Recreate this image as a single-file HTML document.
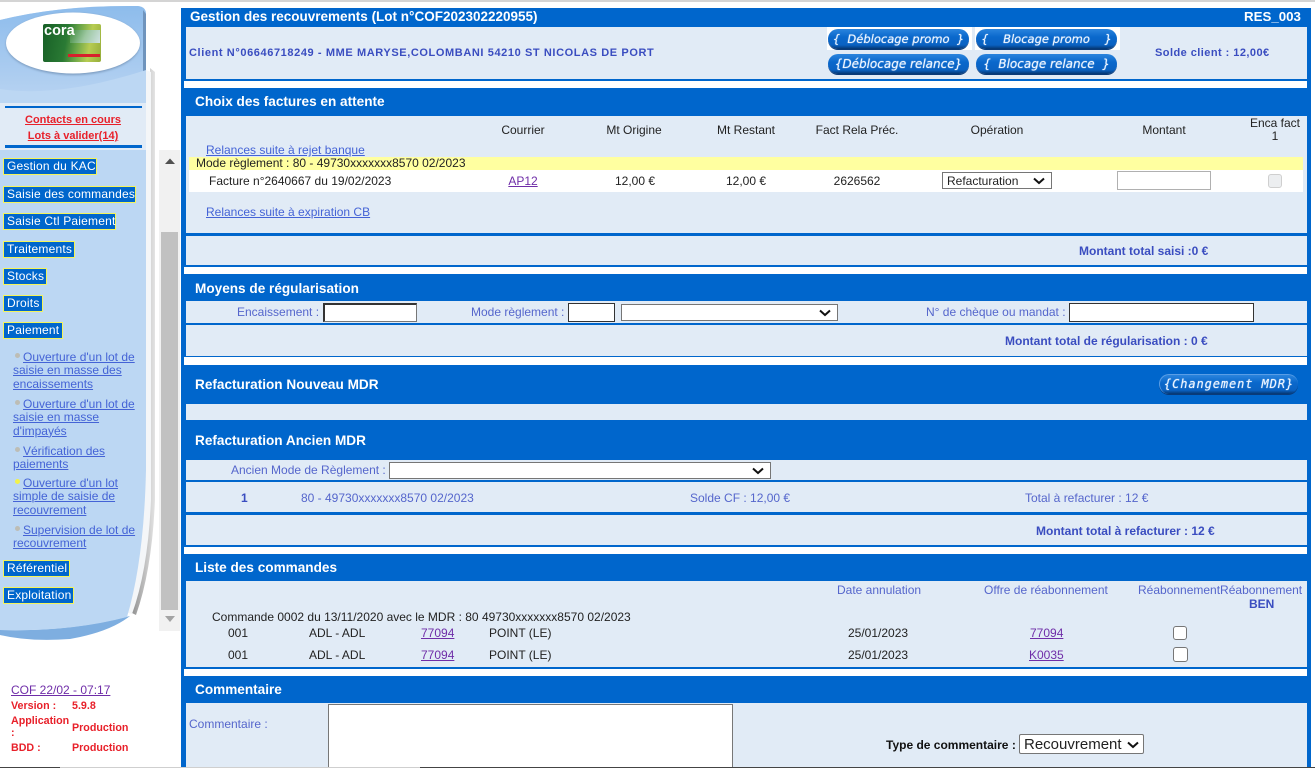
<!DOCTYPE html>
<html lang="fr"><head><meta charset="utf-8"><title>Gestion des recouvrements</title>
<style>
html,body{margin:0;padding:0;background:#fff;width:1315px;height:768px;overflow:hidden}
body{position:relative;font:12px/14px "Liberation Sans",Arial,sans-serif;color:#222}
div,a,span,select,input,textarea{position:absolute;box-sizing:border-box;white-space:nowrap}
a{color:#4463d6;text-decoration:underline}
.v{color:#6f2da8}
.b{background:#0066cc}.l{background:#e1ebf6}.w{background:#fff}
.h{color:#fff;font-weight:bold;font-size:13.6px;line-height:16px}
.lb{color:#5566cc}
.bd{color:#3a4dc0;font-weight:bold}
.c{text-align:center;transform:translateX(-50%)}
.m{background:#0066cc;color:#fff;border:1px solid #f4f45a;height:17px;line-height:15px;padding:0 0 0 3px;font-size:12px;letter-spacing:.2px;left:3px}
.bt{border-radius:10px;background:linear-gradient(#2a84dd 0,#0a68cc 40%,#0a62c2 80%,#06356f 100%);color:#eef6ff;font:italic 11.5px/21px "DejaVu Sans",sans-serif;text-align:center;height:20px;box-shadow:0 1px 0 #0a3a78;text-shadow:0 0 1px #cfe4ff}
.s{left:13px;width:125px;line-height:13.4px;white-space:normal}
.s a{position:static;white-space:normal}
.dot{display:inline-block;position:static;width:5px;height:5px;border-radius:50%;background:#bdbdb5;margin:0 3px 5px 2px;vertical-align:middle}
.r{color:#e8202a;font-weight:bold;font-size:10.7px}
.sel{background:#fff;border:1px solid #767676;height:17px;line-height:16px;padding-left:4px;color:#222}
.sel svg{position:absolute;top:4px;right:6px}
.cb{width:14px;height:14px;border:1px solid #767676;border-radius:3px;background:#fff}
</style></head><body>
<div style="left:0;top:0;width:1315px;height:2px;background:#d4d4d4"></div>

<!-- Sidebar -->
<div style="left:159px;top:150px;width:21px;height:481px;background:#f1f1f1"></div>
<div style="left:161px;top:232px;width:17px;height:378px;background:#c1c1c1"></div>
<svg style="position:absolute;left:163px;top:157px" width="14" height="9"><path d="M2 7L7 1.500L12 7Z" fill="#505050"/></svg>
<svg style="position:absolute;left:163px;top:615px" width="14" height="9"><path d="M2 1L7 7L12 1Z" fill="#a3a3a3"/></svg>
<svg style="position:absolute;left:0;top:0" width="158" height="650">
<defs><linearGradient id="g" x1="0" y1="0" x2="0" y2="1"><stop offset="0" stop-color="#8dbcec"/><stop offset="1" stop-color="#b4d1f1"/></linearGradient>
<linearGradient id="sh" x1="0" x2="1" y1="0" y2="0"><stop offset="0" stop-color="#8a8a8a"/><stop offset="1" stop-color="#e4e4e4"/></linearGradient>
<filter id="bl"><feGaussianBlur stdDeviation="1"/></filter></defs>
<path d="M150 68L155 72L155 500Q152 570 136 615L130 612Q146 570 150 500Z" fill="url(#sh)"/>
<path d="M146 70L151 72L151 500Q148 570 132 614L125 612Q142 560 144 480Z" fill="#f4f6f8"/>
<path d="M0 630Q70 632 130 616Q110 632 70 639Q30 642 0 635Z" fill="#7eaee0"/>
<path d="M0 20Q60 5 138 6Q146 7 146 14L146 470Q144 560 127 617Q70 632 0 630Z" fill="#bcd7f3"/>
<path d="M0 20Q60 5 138 6Q146 7 146 14L146 70Q60 98 0 89Z" fill="url(#g)"/>
<path d="M143 10L146 14L146 70L143 71Z" fill="#6f94bd"/>
<ellipse cx="73" cy="44" rx="67" ry="31" fill="#7d9cc0" filter="url(#bl)"/>
<ellipse cx="73" cy="43" rx="67" ry="30.500" fill="#fff"/>
</svg>
<div style="left:43px;top:24px;width:58px;height:38px;border-radius:2px;background:linear-gradient(100deg,#175f26 0,#2a7a34 40%,#6aa548 58%,#b7cc52 78%,#96ad3a 100%)"></div>
<div style="left:70px;top:30px;width:30px;height:13px;background:linear-gradient(115deg,#3f8a3d,#9cc7a0 50%,#cfe2e2)"></div>
<div style="left:68px;top:54px;width:32px;height:3px;background:#d8202c"></div>
<div style="left:44px;top:23px;color:#fff;font:bold 14.5px/17px 'Liberation Sans',sans-serif">cora</div>

<div class="l" style="left:0;top:103px;width:146px;height:47px"></div>
<div class="b" style="left:5px;top:106px;width:137px;height:2px"></div>
<div class="b" style="left:5px;top:145px;width:137px;height:3px"></div>
<a class="c" style="left:73px;top:113px;color:#e8202a;font-weight:bold;font-size:11px">Contacts en cours</a>
<a class="c" style="left:73px;top:129px;color:#e8202a;font-weight:bold;font-size:11px">Lots à valider(14)</a>

<div class="m" style="top:158px;width:94px">Gestion du KAC</div>
<div class="m" style="top:186px;width:133px">Saisie des commandes</div>
<div class="m" style="top:213px;width:113px">Saisie Ctl Paiement</div>
<div class="m" style="top:241px;width:72px">Traitements</div>
<div class="m" style="top:268px;width:44px">Stocks</div>
<div class="m" style="top:295px;width:40px">Droits</div>
<div class="m" style="top:322px;width:60px">Paiement</div>
<div class="s" style="top:351px"><span class="dot"></span><a>Ouverture d'un lot de saisie en masse des encaissements</a></div>
<div class="s" style="top:398px"><span class="dot"></span><a>Ouverture d'un lot de saisie en masse d'impayés</a></div>
<div class="s" style="top:445px"><span class="dot"></span><a>Vérification des paiements</a></div>
<div class="s" style="top:477px"><span class="dot" style="background:#f2f24a"></span><a>Ouverture d'un lot simple de saisie de recouvrement</a></div>
<div class="s" style="top:524px"><span class="dot"></span><a>Supervision de lot de recouvrement</a></div>
<div class="m" style="top:560px;width:67px">Référentiel</div>
<div class="m" style="top:587px;width:71px">Exploitation</div>

<a class="v" style="left:11px;top:683px">COF 22/02 - 07:17</a>
<div class="r" style="left:11px;top:699px">Version :</div><div class="r" style="left:72px;top:699px">5.9.8</div>
<div class="r" style="left:11px;top:715px;line-height:12px;white-space:normal;width:60px">Application :</div><div class="r" style="left:72px;top:721px">Production</div>
<div class="r" style="left:11px;top:741px">BDD :</div><div class="r" style="left:72px;top:741px">Production</div>

<!-- Main frame -->
<div class="b" style="left:181px;top:8px;width:1130px;height:760px"></div>
<div class="l" style="left:186px;top:27px;width:1121px;height:52px"></div>
<div class="w" style="left:184px;top:81px;width:1123px;height:7px"></div>
<div class="l" style="left:186px;top:116px;width:1121px;height:117px"></div>
<div class="l" style="left:186px;top:236px;width:1121px;height:29px"></div>
<div class="w" style="left:184px;top:267px;width:1123px;height:7px"></div>
<div class="l" style="left:186px;top:301px;width:1121px;height:22px"></div>
<div class="l" style="left:186px;top:325px;width:1121px;height:31px"></div>
<div class="w" style="left:184px;top:357px;width:1123px;height:8px"></div>
<div class="l" style="left:186px;top:404px;width:1121px;height:16px"></div>
<div class="l" style="left:186px;top:460px;width:1121px;height:20px"></div>
<div class="l" style="left:186px;top:482px;width:1121px;height:30px"></div>
<div class="l" style="left:186px;top:515px;width:1121px;height:30px"></div>
<div class="w" style="left:184px;top:547px;width:1123px;height:7px"></div>
<div class="l" style="left:186px;top:581px;width:1121px;height:86px"></div>
<div class="w" style="left:184px;top:669px;width:1123px;height:7px"></div>
<div class="l" style="left:186px;top:703px;width:1121px;height:65px"></div>

<!-- Header -->
<div class="h" style="left:190px;top:9px;font-size:13.5px">Gestion des recouvrements (Lot n°COF202302220955)</div>
<div class="h" style="left:1244px;top:9px;font-size:13.3px">RES_003</div>
<div class="bd" style="left:189px;top:46px;font-size:11px;letter-spacing:.6px">Client N°06646718249 - MME MARYSE,COLOMBANI 54210 ST NICOLAS DE PORT</div>
<div class="w" style="left:827px;top:27px;width:145px;height:23px"></div>
<div class="w" style="left:975px;top:27px;width:145px;height:23px"></div>
<div class="bt" style="left:828px;top:29px;width:141px">{&nbsp; Déblocage promo &nbsp;}</div>
<div class="bt" style="left:976px;top:29px;width:141px">{&nbsp;&nbsp;&nbsp; Blocage promo &nbsp;&nbsp;&nbsp;}</div>
<div class="bt" style="left:828px;top:54px;width:141px;font-size:12px">{Déblocage relance}</div>
<div class="bt" style="left:976px;top:54px;width:141px;font-size:12px">{ &nbsp;Blocage relance &nbsp;}</div>
<div class="bd" style="left:1155px;top:46px;font-size:11px;letter-spacing:.45px">Solde client : 12,00€</div>

<!-- Choix -->
<div class="h" style="left:195px;top:94px">Choix des factures en attente</div>
<div class="c" style="left:523px;top:123px">Courrier</div>
<div class="c" style="left:634px;top:123px">Mt Origine</div>
<div class="c" style="left:746px;top:123px">Mt Restant</div>
<div class="c" style="left:857px;top:123px">Fact Rela Préc.</div>
<div class="c" style="left:997px;top:123px">Opération</div>
<div class="c" style="left:1164px;top:123px">Montant</div>
<div class="c" style="left:1275px;top:117px;text-align:center;line-height:13px">Enca fact<br>1</div>
<a style="left:206px;top:143px">Relances suite à rejet banque</a>
<div style="left:189px;top:157px;width:1114px;height:13px;background:#ffffa0"></div>
<div style="left:196px;top:157px;line-height:13px">Mode règlement : 80 - 49730xxxxxxx8570 02/2023</div>
<div class="w" style="left:189px;top:170px;width:1114px;height:22px"></div>
<div style="left:209px;top:174px">Facture n°2640667 du 19/02/2023</div>
<a class="c v" style="left:523px;top:174px">AP12</a>
<div class="c" style="left:635px;top:174px">12,00 €</div>
<div class="c" style="left:746px;top:174px">12,00 €</div>
<div class="c" style="left:857px;top:174px">2626562</div>
<div class="sel" style="left:942px;top:172px;width:110px">Refacturation<svg width="12" height="8"><path d="M1 1.500L6 6L11 1.500" fill="none" stroke="#111" stroke-width="2"/></svg></div>
<div class="w" style="left:1117px;top:171px;width:94px;height:19px;border:1px solid #b0b0b0"></div>
<div class="cb" style="left:1268px;top:174px;background:#eceef0;border-color:#cfcfcf"></div>
<a style="left:206px;top:205px">Relances suite à expiration CB</a>
<div class="bd" style="left:1079px;top:244px">Montant total saisi :0 €</div>

<!-- Moyens -->
<div class="h" style="left:195px;top:281px">Moyens de régularisation</div>
<div class="lb" style="left:237px;top:305px">Encaissement :</div>
<div class="w" style="left:323px;top:303px;width:94px;height:19px;border-style:solid;border-width:2px 1px 1px 2px;border-color:#333 #777 #777 #333"></div>
<div class="lb" style="left:471px;top:305px">Mode règlement :</div>
<div class="w" style="left:568px;top:303px;width:47px;height:19px;border:1px solid #333"></div>
<div class="sel" style="left:621px;top:304px;width:217px"><svg width="12" height="8"><path d="M1 1.500L6 6L11 1.500" fill="none" stroke="#111" stroke-width="2"/></svg></div>
<div class="lb" style="left:926px;top:305px">N° de chèque ou mandat :</div>
<div class="w" style="left:1069px;top:303px;width:185px;height:19px;border:1px solid #333"></div>
<div class="bd" style="left:1005px;top:334px">Montant total de régularisation : 0 €</div>

<!-- Refacturation -->
<div class="h" style="left:195px;top:377px">Refacturation Nouveau MDR</div>
<div class="bt" style="left:1159px;top:374px;width:139px;font:italic 12px/18px 'DejaVu Sans Mono',monospace;letter-spacing:.9px;border-style:solid;border-color:#5a9ee6;border-width:1px 0 0 1px">{Changement MDR}</div>
<div class="h" style="left:195px;top:433px">Refacturation Ancien MDR</div>
<div class="lb" style="left:231px;top:463px">Ancien Mode de Règlement :</div>
<div class="sel" style="left:389px;top:462px;width:382px"><svg width="12" height="8"><path d="M1 1.500L6 6L11 1.500" fill="none" stroke="#111" stroke-width="2"/></svg></div>
<div class="bd" style="left:241px;top:491px">1</div>
<div class="lb" style="left:301px;top:491px">80 - 49730xxxxxxx8570 02/2023</div>
<div class="lb" style="left:690px;top:491px">Solde CF : 12,00 €</div>
<div class="lb" style="left:1025px;top:491px">Total à refacturer : 12 €</div>
<div class="bd" style="left:1036px;top:524px">Montant total à refacturer : 12 €</div>

<!-- Liste -->
<div class="h" style="left:195px;top:560px">Liste des commandes</div>
<div class="lb" style="left:837px;top:583px">Date annulation</div>
<div class="lb" style="left:984px;top:583px">Offre de réabonnement</div>
<div class="lb" style="left:1138px;top:583px">RéabonnementRéabonnement</div>
<div class="bd" style="left:1249px;top:597px">BEN</div>
<div style="left:212px;top:610px">Commande 0002 du 13/11/2020 avec le MDR : 80 49730xxxxxxx8570 02/2023</div>
<div style="left:228px;top:626px">001</div><div style="left:309px;top:626px">ADL - ADL</div>
<a class="v" style="left:421px;top:626px">77094</a><div style="left:489px;top:626px">POINT (LE)</div>
<div style="left:848px;top:626px">25/01/2023</div><a class="v" style="left:1030px;top:626px">77094</a>
<div class="cb" style="left:1173px;top:626px"></div>
<div style="left:228px;top:648px">001</div><div style="left:309px;top:648px">ADL - ADL</div>
<a class="v" style="left:421px;top:648px">77094</a><div style="left:489px;top:648px">POINT (LE)</div>
<div style="left:848px;top:648px">25/01/2023</div><a class="v" style="left:1029px;top:648px">K0035</a>
<div class="cb" style="left:1173px;top:647px;width:15px;height:15px"></div>

<!-- Commentaire -->
<div class="h" style="left:195px;top:682px">Commentaire</div>
<div class="lb" style="left:189px;top:717px">Commentaire :</div>
<div class="w" style="left:328px;top:704px;width:405px;height:64px;border:1px solid #777"></div>
<div style="left:886px;top:738px;font-weight:bold;color:#111">Type de commentaire :</div>
<div class="sel" style="left:1019px;top:734px;width:125px;height:20px;font-size:15px;line-height:19px;border-radius:2px">Recouvrement<svg width="12" height="8" style="top:6px;right:4px"><path d="M1 1.500L6 6L11 1.500" fill="none" stroke="#111" stroke-width="2"/></svg></div>

<div style="left:0;top:767px;width:60px;height:1px;background:#444"></div>
<div style="left:60px;top:767px;width:360px;height:1px;background:#cfcfcf"></div>
<div style="left:420px;top:767px;width:895px;height:1px;background:#444"></div>
</body></html>
